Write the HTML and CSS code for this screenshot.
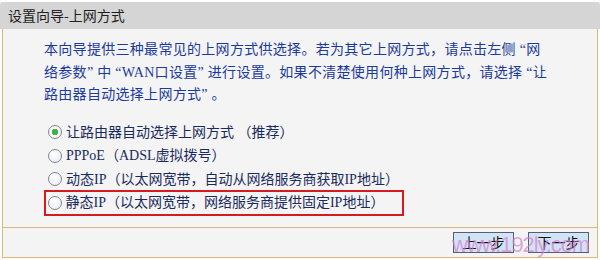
FILE: index.html
```html
<!DOCTYPE html>
<html lang="zh-CN">
<head>
    <meta charset="UTF-8">
    <meta name="viewport" content="width=device-width, initial-scale=1.0">
    <title>设置向导-上网方式</title>
    <link rel="stylesheet" href="styles.css">
</head>
<body>

    <div class="wizard">
        <div class="wizard-title">设置向导-上网方式</div>

        <div class="wizard-body">
            <p class="intro">本向导提供三种最常见的上网方式供选择。若为其它上网方式，请点击左侧 “网络参数” 中 “WAN口设置” 进行设置。如果不清楚使用何种上网方式，请选择 “让路由器自动选择上网方式” 。</p>

            <!-- 上网方式选项 -->
            <ul class="options">
                <li><label><input type="radio" name="wantype" checked>让路由器自动选择上网方式 （推荐）</label></li>
                <li><label><input type="radio" name="wantype">PPPoE（ADSL虚拟拨号）</label></li>
                <li><label><input type="radio" name="wantype">动态IP（以太网宽带，自动从网络服务商获取IP地址）</label></li>
                <li class="highlight"><label><input type="radio" name="wantype">静态IP（以太网宽带，网络服务商提供固定IP地址）</label></li>
            </ul>
        </div>

        <div class="wizard-foot">
            <button class="btn">上一步</button>
            <button class="btn">下一步</button>
            <span class="watermark">www.192ly.com</span>
        </div>
    </div>

</body>
</html>
```

FILE: styles.css
```css
body {
    margin: 0;
    padding: 0;
    background-color: #fff;
    font-family: "Liberation Serif", "Noto Sans CJK SC", serif;
    font-size: 14px;
}

.wizard {
    padding-top: 2px;
}

.wizard-title {
    background-color: #d5d5d5;
    color: #1e1e1e;
    height: 27px;
    line-height: 27px;
    padding-left: 8px;
    border-radius: 3px 3px 0 0;
    font-family: "Noto Sans CJK SC", sans-serif;
    font-size: 14px;
}

.wizard-body {
    margin: 0 2px;
    background-color: #f4f4f4;
    border-left: 1px solid #dcb77a;
    border-right: 1px solid #dcb77a;
    padding: 10px 47px 0 41px;
    height: 188px;
}

.intro {
    margin: 0;
    color: #1a3a9c;
    line-height: 22.5px;
    letter-spacing: 0.3px;
}

.options {
    list-style: none;
    margin: 14px 0 0;
    padding: 0;
    color: #1a2a5e;
}

.options li {
    height: 23.5px;
    line-height: 23.5px;
    padding-left: 4px;
}

.options label {
    display: flex;
    align-items: center;
}

.options input {
    appearance: none;
    -webkit-appearance: none;
    width: 14px;
    height: 14px;
    margin: 0 4px 0 0;
    border: 1px solid #7b8797;
    border-radius: 50%;
    background: radial-gradient(circle at 40% 35%, #ffffff, #e4e8ee);
    box-sizing: border-box;
    flex-shrink: 0;
}

.options input:checked {
    background: radial-gradient(circle, #3fb24a 0 3px, #ffffff 3.5px, #e4e8ee);
}

/* 需要选择的方式用红框标出 */
.options li.highlight {
    width: fit-content;
    height: 26px;
    line-height: 21px;
    margin-top: -1px;
    padding: 0 18px 0 1.5px;
    border: 2.5px solid #d71920;
    box-sizing: border-box;
}

.wizard-foot {
    position: relative;
    margin: 0 2px;
    height: 29px;
    background-color: #f4f4f4;
    border: 1px solid #dcb77a;
    display: flex;
    justify-content: flex-end;
    align-items: center;
    gap: 14px;
    padding-right: 8px;
}

.btn {
    width: 61px;
    height: 21px;
    padding: 0;
    background-color: #d3e3f6;
    border: 1px solid #56606c;
    color: #111;
    font-family: "Noto Sans CJK SC", sans-serif;
    font-size: 14px;
    line-height: 19px;
}

.watermark {
    position: absolute;
    right: 8px;
    bottom: -1px;
    color: rgba(210, 130, 205, 0.7);
    font-family: "Liberation Sans", Arial, sans-serif;
    font-size: 22px;
    letter-spacing: -1.1px;
    pointer-events: none;
}
```
